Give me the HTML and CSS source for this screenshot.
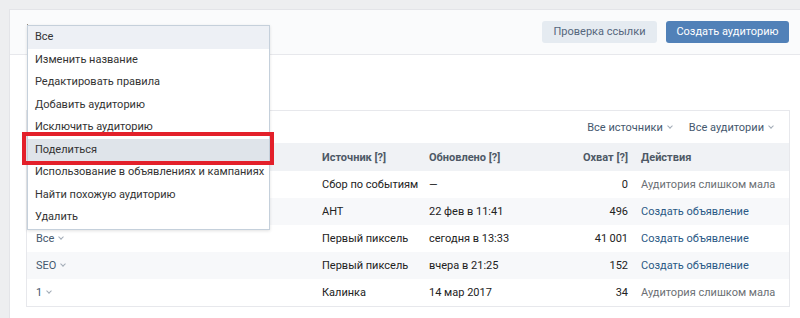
FILE: index.html
```html
<!DOCTYPE html>
<html lang="ru">
<head>
<meta charset="utf-8">
<link rel="stylesheet" href="styles.css">
</head>
<body>
<div class="page">
  <div class="card">
    <div class="card-head">
      <span class="title-peek"></span>
      <div class="actions">
        <button class="btn btn-secondary">Проверка ссылки</button>
        <button class="btn btn-primary">Создать аудиторию</button>
      </div>
    </div>
    <div class="card-body">
      <div class="table">
        <div class="filters">
          <span class="filter">Все источники <i class="chev"></i></span>
          <span class="filter">Все аудитории <i class="chev"></i></span>
        </div>
        <div class="row head">
          <div class="c1"></div>
          <div class="c2">Источник [?]</div>
          <div class="c3">Обновлено [?]</div>
          <div class="c4">Охват [?]</div>
          <div class="c5">Действия</div>
        </div>
        <div class="row">
          <div class="c1"></div>
          <div class="c2">Сбор по событиям</div>
          <div class="c3">—</div>
          <div class="c4">0</div>
          <div class="c5 muted">Аудитория слишком мала</div>
        </div>
        <div class="row alt">
          <div class="c1"></div>
          <div class="c2">АНТ</div>
          <div class="c3">22 фев в 11:41</div>
          <div class="c4">496</div>
          <div class="c5 link">Создать объявление</div>
        </div>
        <div class="row">
          <div class="c1 sel">Все <i class="chev"></i></div>
          <div class="c2">Первый пиксель</div>
          <div class="c3">сегодня в 13:33</div>
          <div class="c4">41&#8201;001</div>
          <div class="c5 link">Создать объявление</div>
        </div>
        <div class="row alt">
          <div class="c1 sel">SEO <i class="chev"></i></div>
          <div class="c2">Первый пиксель</div>
          <div class="c3">вчера в 21:25</div>
          <div class="c4">152</div>
          <div class="c5 link">Создать объявление</div>
        </div>
        <div class="row">
          <div class="c1 sel">1 <i class="chev"></i></div>
          <div class="c2">Калинка</div>
          <div class="c3">14 мар 2017</div>
          <div class="c4">34</div>
          <div class="c5 muted">Аудитория слишком мала</div>
        </div>
      </div>
    </div>
  </div>
</div>

<ul class="menu">
  <li class="item first">Все</li>
  <li class="item">Изменить название</li>
  <li class="item">Редактировать правила</li>
  <li class="item">Добавить аудиторию</li>
  <li class="item">Исключить аудиторию</li>
  <li class="item hover">Поделиться</li>
  <li class="item">Использование в объявлениях и кампаниях</li>
  <li class="item">Найти похожую аудиторию</li>
  <li class="item">Удалить</li>
</ul>
<div class="mark"></div>
</body>
</html>
```

FILE: styles.css
```css
* { box-sizing: border-box; }
html, body { margin: 0; padding: 0; }
body {
  background: #edeef0;
  font-family: Roboto, "Open Sans", "Liberation Sans", sans-serif;
  font-size: 11px;
  color: #222;
  width: 800px;
  height: 318px;
  overflow: hidden;
  position: relative;
}
.page { padding: 9px 0 0 9px; }
.card {
  background: #fff;
  border-left: 1px solid #e3e4e8;
  border-top: 1px solid #e3e4e8;
  height: 320px;
}
.card-head {
  height: 45px;
  background: #fafbfc;
  border-bottom: 1px solid #e7e8ec;
  display: flex;
  align-items: center;
  justify-content: space-between;
  padding: 0 11px 0 17px;
}
.title-peek { display: block; width: 1px; height: 10px; background: #9a8f84; margin-top: -7px; }
.actions { display: flex; gap: 9px; }
.btn {
  font-family: inherit;
  font-size: 11px;
  height: 22px;
  border: 0;
  border-radius: 3px;
  padding: 0;
  line-height: 22px;
  white-space: nowrap;
  cursor: pointer;
}
.btn-secondary { background: #e5ebf1; color: #55677d; width: 115px; }
.btn-primary { background: #5181b8; color: #fff; width: 123px; }
.card-body { padding: 55px 11px 0 16px; }
.table {
  border: 1px solid #e7e8ec;
  width: 764px;
}
.filters {
  height: 32px;
  display: flex;
  justify-content: flex-end;
  align-items: center;
  gap: 17px;
  padding: 0 16px 0 0;
}
.filter { color: #45586e; display: inline-flex; align-items: center; gap: 3px; }
.chev {
  display: inline-block;
  width: 4px;
  height: 4px;
  border-right: 1px solid #a2abb6;
  border-bottom: 1px solid #a2abb6;
  transform: rotate(45deg);
  margin: -3px 0 0 2px;
}
.row {
  display: grid;
  grid-template-columns: 287px 107px 140px 75px 1fr;
  height: 27px;
  align-items: center;
  white-space: nowrap;
}
.row.head { height: 28px; background: #f0f2f5; font-weight: 700; color: #4e5966; }
.row.alt { background: #f7f8fa; }
.c1 { padding-left: 9px; }
.c2, .c3 { padding-left: 8px; }
.c4 { text-align: right; padding-right: 8px; }
.c5 { padding-left: 5px; }
.sel { color: #45586e; display: flex; align-items: center; gap: 3px; }
.link { color: #2a5885; }
.muted { color: #6b6f74; }

.menu {
  position: absolute;
  left: 27px;
  top: 25px;
  width: 243px;
  margin: 0;
  padding: 0;
  list-style: none;
  background: #fff;
  border: 1px solid #c5d0db;
  box-shadow: 0 1px 3px rgba(0,0,0,0.12);
}
.item {
  height: 22.5px;
  line-height: 22.5px;
  padding-left: 7px;
  color: #333;
  white-space: nowrap;
}
.item.first { background: #edf0f5; }
.item.hover { background: #dfe4ea; }
.mark {
  position: absolute;
  left: 22px;
  top: 132px;
  width: 252px;
  height: 33px;
  border: 4px solid #e3202a;
}
```
